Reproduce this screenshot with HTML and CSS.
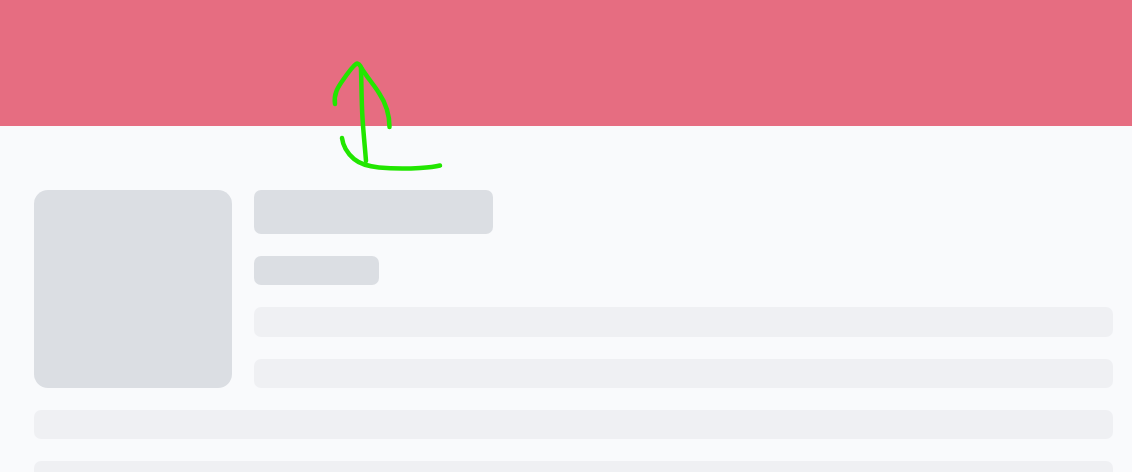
FILE: index.html
```html
<!DOCTYPE html>
<html lang="en">
  <head>
    <meta charset="UTF-8" />
    <meta name="viewport" content="width=device-width, initial-scale=1.0" />
    <title>Loading</title>
    <link rel="stylesheet" href="styles.css">
  </head>
  <body>
    <div class="banner"></div>
    <div class="content">
      <div class="top-row">
        <div class="thumb"></div>
        <div class="details">
          <div class="block title"></div>
          <div class="block subtitle"></div>
          <div class="line"></div>
          <div class="line"></div>
        </div>
      </div>
      <div class="line"></div>
      <div class="line"></div>
    </div>
    <!-- hand drawn arrow on top of the page -->
    <svg class="scribble" width="1132" height="472" viewBox="0 0 1132 472" fill="none">
      <path d="M335 104 C333.500 94 338 87 343 80 C347.500 73.500 352 67 356 64 C358 62.500 360 65 362 69 C367 77 374 85 379 93 C385 102 389.500 112 389.500 127" />
      <path d="M361 68 C361.500 85 361.500 103 362.500 118 C363.500 134 365 148 366 161" />
      <path d="M342 138 C343 146 347 153 354 159 C360 164 369 166.500 379 167.500 C392 168.700 408 168.700 420 168 C428 167.500 434 167 440 165.500" />
    </svg>
  </body>
</html>
```

FILE: styles.css
```css
body {
  margin: 0;
  height: 472px;
  overflow: hidden;
  background-color: #f9fafc;
}
.banner {
  height: 126px;
  background-color: #e66d81;
}
.content {
  display: flex;
  flex-direction: column;
  gap: 22px;
  padding: 64px 19.500px 0 34px;
  filter: blur(0.4px);
}
.top-row {
  display: flex;
  gap: 22px;
}
.thumb {
  flex: 0 0 198px;
  height: 198px;
  background-color: #dbdee3;
  border-radius: 14px;
}
.details {
  flex: 1;
  display: flex;
  flex-direction: column;
  gap: 22px;
}
.block {
  background-color: #dbdee3;
  border-radius: 7px;
}
.title {
  width: 239px;
  height: 44px;
}
.subtitle {
  width: 125px;
  height: 29.33px;
}
.line {
  height: 29.33px;
  background-color: #eff0f3;
  border-radius: 7px;
}
.scribble {
  position: absolute;
  top: 0;
  left: 0;
}
.scribble path {
  stroke: #22e600;
  stroke-width: 4.500;
  stroke-linecap: round;
  stroke-linejoin: round;
}
```
